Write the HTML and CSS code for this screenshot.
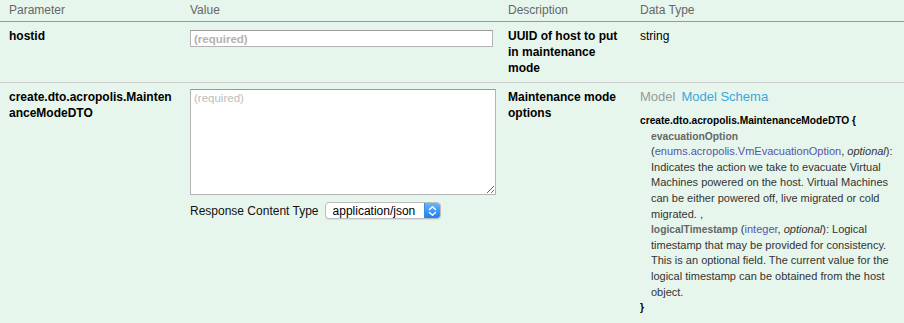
FILE: index.html
```html
<!DOCTYPE html>
<html>
<head>
<meta charset="utf-8">
<link rel="stylesheet" href="styles.css">
</head>
<body>
<div class="params">
  <div class="row head">
    <div class="cell c1">Parameter</div>
    <div class="cell c2">Value</div>
    <div class="cell c3">Description</div>
    <div class="cell c4">Data Type</div>
  </div>
  <div class="row">
    <div class="cell c1 name">hostid</div>
    <div class="cell c2"><input class="field required" type="text" placeholder="(required)"></div>
    <div class="cell c3 desc">UUID of host to put in maintenance mode</div>
    <div class="cell c4 type">string</div>
  </div>
  <div class="row last">
    <div class="cell c1 name">create.dto.acropolis.MaintenanceModeDTO</div>
    <div class="cell c2">
      <textarea class="body-area" placeholder="(required)"></textarea>
      <div class="ctype">
        <label class="ctype-label">Response Content Type</label>
        <div class="select">
          <select class="select-native"><option>application/json</option></select>
          <span class="stepper">
            <svg width="15" height="16" viewBox="0 0 15 16"><path d="M4.5 6.5 L7.5 3.8 L10.5 6.5 M4.5 9.5 L7.5 12.2 L10.5 9.5" fill="none" stroke="#fff" stroke-width="1.4" stroke-linecap="round" stroke-linejoin="round"/></svg>
          </span>
        </div>
      </div>
    </div>
    <div class="cell c3 desc">Maintenance mode options</div>
    <div class="cell c4">
      <div class="tabs"><span class="tab">Model</span><span class="tab active">Model Schema</span></div>
      <div class="schema">
        <div class="strong">create.dto.acropolis.MaintenanceModeDTO {</div>
        <div class="prop"><span class="propName">evacuationOption</span> (<span class="propType">enums.acropolis.VmEvacuationOption</span>, <span class="propOpt">optional</span>): Indicates the action we take to evacuate Virtual Machines powered on the host. Virtual Machines can be either powered off, live migrated or cold migrated. ,</div>
        <div class="prop"><span class="propName">logicalTimestamp</span> (<span class="propType">integer</span>, <span class="propOpt">optional</span>): Logical timestamp that may be provided for consistency. This is an optional field. The current value for the logical timestamp can be obtained from the host object.</div>
        <div class="strong">}</div>
      </div>
    </div>
  </div>
</div>
</body>
</html>
```
FILE: styles.css
```css
html, body {
  margin: 0;
  padding: 0;
  background: #e7f6ec;
}
body {
  font-family: "Liberation Sans", Arial, sans-serif;
  font-size: 12px;
  color: #000;
  width: 904px;
  height: 323px;
  overflow: hidden;
}
.row {
  display: grid;
  grid-template-columns: 181px 318px 132px 1fr;
  padding-left: 9px;
  border-bottom: 1px solid #cccccc;
}
.row.head {
  height: 21px;
  border-bottom-color: #999999;
}
.row.last { padding-bottom: 14px; }
.head .cell {
  color: #666;
  padding: 2px 0 0;
  line-height: 16px;
}
.cell {
  padding: 6px 0;
  line-height: 16px;
}
.c1 { padding-right: 15px; word-break: break-all; }
.c3 { padding-right: 12px; }
.name, .desc { font-weight: bold; }
.type { color: #000; }
.field {
  display: block;
  box-sizing: border-box;
  width: 303px;
  height: 17px;
  margin: 2px 0 0;
  padding: 0 3px;
  border: 1px solid #b4b4b4;
  border-top-color: #9a9a9a;
  background: #fff;
  font-family: "Liberation Sans", Arial, sans-serif;
  font-size: 11.5px;
  font-weight: bold;
  outline: none;
}
.field::placeholder { color: #b3b3b3; }
.body-area {
  display: block;
  box-sizing: border-box;
  width: 306px;
  height: 106px;
  margin: 0;
  padding: 2px 3px;
  border: 1px solid #b4b4b4;
  border-top-color: #9a9a9a;
  background: #fff;
  font-family: "Liberation Sans", Arial, sans-serif;
  font-size: 11.5px;
  resize: both;
  outline: none;
}
.body-area::placeholder { color: #bdbdbd; }
.ctype {
  display: flex;
  align-items: center;
  gap: 6px;
  margin-top: 7px;
}
.ctype-label { font-size: 12px; color: #111; }
.select {
  display: flex;
  width: 116px;
  height: 17px;
  box-sizing: border-box;
  border: 1px solid #bdbdbd;
  border-radius: 4px;
  background: #fff;
  overflow: hidden;
  box-shadow: 0 1px 1px rgba(0,0,0,0.08);
}
.select-native {
  appearance: none;
  -webkit-appearance: none;
  flex: 1;
  min-width: 0;
  border: none;
  background: transparent;
  padding: 0 0 0 7px;
  margin: 0;
  font-family: "Liberation Sans", Arial, sans-serif;
  font-size: 12px;
  color: #000;
  outline: none;
}
.stepper {
  display: flex;
  width: 15px;
  background: linear-gradient(#6ab4fb, #1b7ff5);
  border-left: 1px solid #3d8be0;
}
.tabs {
  display: flex;
  gap: 6px;
  font-size: 13px;
  line-height: 16px;
}
.tab { color: #999; }
.tab.active { color: #3aa6df; }
.schema {
  margin-top: 8px;
  font-size: 11px;
  line-height: 15.6px;
  color: #333;
  padding-right: 4px;
}
.strong {
  font-weight: bold;
  color: #000;
  font-size: 10.2px;
}
.prop { margin-left: 11px; }
.propName { font-weight: bold; color: #666; font-size: 10.3px; }
.propType { color: #55a; }
.propOpt { font-style: italic; }
```
